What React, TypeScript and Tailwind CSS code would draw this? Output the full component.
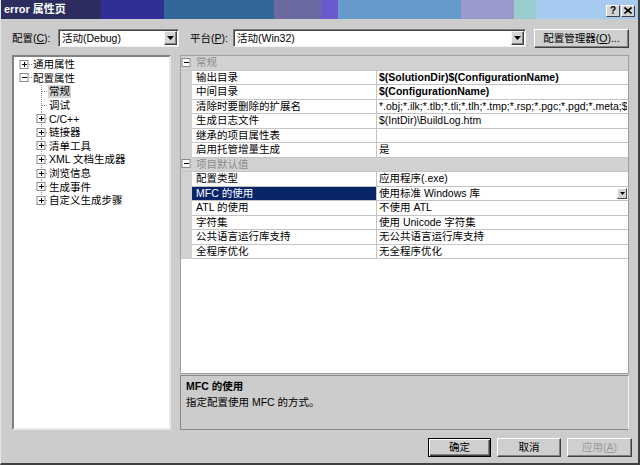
import React from "react";

const TREE: { level: number; kind: "plus" | "minus" | "leaf"; label: string; selected?: boolean; last?: boolean }[] = [
  { level: 0, kind: "plus", label: "通用属性" },
  { level: 0, kind: "minus", label: "配置属性" },
  { level: 1, kind: "leaf", label: "常规", selected: true },
  { level: 1, kind: "leaf", label: "调试" },
  { level: 1, kind: "plus", label: "C/C++" },
  { level: 1, kind: "plus", label: "链接器" },
  { level: 1, kind: "plus", label: "清单工具" },
  { level: 1, kind: "plus", label: "XML 文档生成器" },
  { level: 1, kind: "plus", label: "浏览信息" },
  { level: 1, kind: "plus", label: "生成事件" },
  { level: 1, kind: "plus", label: "自定义生成步骤", last: true },
];

function ExpBox({ cx, kind }: { cx: number; kind: "plus" | "minus" }) {
  return (
    <g>
      <rect x={cx - 4} y={2.5} width={8} height={8} fill="#ffffff" stroke="#8a8a8a" />
      <line x1={cx - 2} y1={6.5} x2={cx + 3} y2={6.5} stroke="#000" />
      {kind === "plus" && <line x1={cx + 0.5} y1={4} x2={cx + 0.5} y2={9} stroke="#000" />}
    </g>
  );
}

function TreeRow({ level, kind, label, selected, last }: (typeof TREE)[number]) {
  const w = level === 0 ? 18 : 34;
  const cx = level === 0 ? 10 : 27;
  return (
    <div className="flex items-center h-[13.6px]">
      <svg width={w} height={14} className="shrink-0">
        {level === 1 && (
          <line x1={cx + 0.5} y1={0} x2={cx + 0.5} y2={last ? 7 : 14} stroke="#909090" strokeDasharray="1 1" />
        )}
        {kind === "leaf" ? (
          <line x1={cx + 1} y1={6.5} x2={w} y2={6.5} stroke="#909090" strokeDasharray="1 1" />
        ) : (
          <>
            <ExpBox cx={cx} kind={kind} />
            <line x1={cx + 5} y1={6.5} x2={w} y2={6.5} stroke="#909090" strokeDasharray="1 1" />
          </>
        )}
      </svg>
      <span className={selected ? "bg-[#d4d4d4] px-[1px] leading-[13px]" : "px-[1px] leading-[13px]"}>{label}</span>
    </div>
  );
}

function Arrow() {
  return (
    <div className="w-[13px] h-[14px] shrink-0 bg-[#d4d4d4] border border-t-[#f4f4f4] border-l-[#f4f4f4] border-r-[#404040] border-b-[#404040] shadow-[inset_-1px_-1px_0_#808080] flex items-center justify-center">
      <svg width={7} height={4}>
        <polygon points="0,0 7,0 3.5,4" fill="#000" />
      </svg>
    </div>
  );
}

function Combo({ w, text }: { w: string; text: string }) {
  return (
    <div className={`${w} h-[18px] bg-white border border-t-[#808080] border-l-[#808080] border-r-[#f0f0f0] border-b-[#f0f0f0] shadow-[inset_1px_1px_0_#404040] flex items-center pl-[3px] pr-[1px]`}>
      <span className="flex-1 leading-[13px] whitespace-nowrap">{text}</span>
      <Arrow />
    </div>
  );
}

type Prop = { name: string; value: string; bold?: boolean; sel?: boolean; dd?: boolean };
const GROUPS: { title: string; rows: Prop[] }[] = [
  {
    title: "常规",
    rows: [
      { name: "输出目录", value: "$(SolutionDir)$(ConfigurationName)", bold: true },
      { name: "中间目录", value: "$(ConfigurationName)", bold: true },
      { name: "清除时要删除的扩展名", value: "*.obj;*.ilk;*.tlb;*.tli;*.tlh;*.tmp;*.rsp;*.pgc;*.pgd;*.meta;$" },
      { name: "生成日志文件", value: "$(IntDir)\\BuildLog.htm" },
      { name: "继承的项目属性表", value: "" },
      { name: "启用托管增量生成", value: "是" },
    ],
  },
  {
    title: "项目默认值",
    rows: [
      { name: "配置类型", value: "应用程序(.exe)" },
      { name: "MFC 的使用", value: "使用标准 Windows 库", sel: true, dd: true },
      { name: "ATL 的使用", value: "不使用 ATL" },
      { name: "字符集", value: "使用 Unicode 字符集" },
      { name: "公共语言运行库支持", value: "无公共语言运行库支持" },
      { name: "全程序优化", value: "无全程序优化" },
    ],
  },
];

function Btn({ children, def, disabled, w }: { children: React.ReactNode; def?: boolean; disabled?: boolean; w: string }) {
  return (
    <div
      className={`${w} h-[19px] flex items-center justify-center bg-[#cfcfcf] ${
        def
          ? "border border-black shadow-[inset_1px_1px_0_#ffffff,inset_-1px_-1px_0_#404040,inset_-2px_-2px_0_#808080]"
          : "border border-t-white border-l-white border-r-[#404040] border-b-[#404040] shadow-[inset_-1px_-1px_0_#808080]"
      } ${disabled ? "text-[#9a9a9a]" : "text-black"}`}
    >
      <span className="leading-[13px]">{children}</span>
    </div>
  );
}

export default function App() {
  return (
    <div className="w-[640px] h-[465px] bg-[#cccccc] flex flex-col border-r-2 border-b-2 border-r-[#404040] border-b-[#404040] border-l border-l-[#e4e4e4] overflow-hidden text-[10.5px] text-black font-[Tahoma,'Liberation_Sans','Noto_Sans_CJK_SC',sans-serif]">
      {/* title bar */}
      <div className="h-[19px] shrink-0 flex items-center justify-between pl-[3px] pr-[3px] bg-[linear-gradient(90deg,#2c2d5e_0px,#2c2d5e_100px,#2f2f96_100px,#2f2f96_163px,#336699_163px,#336699_273px,#6b6aa0_273px,#6b6aa0_320px,#6a5acd_320px,#6a5acd_337px,#6699cc_337px,#6699cc_460px,#9999cc_460px,#9999cc_513px,#99cccc_513px,#99cccc_535px,#a6caf0_535px)]">
        <span className="text-white font-bold text-[11px] leading-[13px]">error 属性页</span>
        <div className="flex gap-[1px] mt-[2px]">
          <div className="w-[14px] h-[12px] bg-[#d4d4d4] border border-t-white border-l-white border-r-[#404040] border-b-[#404040] flex items-center justify-center text-[10px] font-bold leading-[10px]">?</div>
          <div className="w-[14px] h-[12px] bg-[#d4d4d4] border border-t-white border-l-white border-r-[#404040] border-b-[#404040] flex items-center justify-center">
            <svg width={8} height={7}>
              <path d="M0.5 0.5 L7.5 6.5 M7.5 0.5 L0.5 6.5" stroke="#000" strokeWidth={1.6} />
            </svg>
          </div>
        </div>
      </div>

      {/* top row */}
      <div className="mt-[9px] h-[20px] shrink-0 flex items-center pl-[11px]">
        <span className="w-[46px] leading-[13px]">
          配置(<u>C</u>):
        </span>
        <Combo w="w-[121px]" text="活动(Debug)" />
        <span className="ml-[11px] w-[43px] leading-[13px]">
          平台(<u>P</u>):
        </span>
        <Combo w="w-[293px]" text="活动(Win32)" />
        <div className="ml-[8px]">
          <Btn w="w-[95px]">
            配置管理器(<u>O</u>)...
          </Btn>
        </div>
      </div>

      {/* main area */}
      <div className="mt-[7px] h-[375px] shrink-0 flex pl-[11px]">
        <div className="w-[159px] h-full bg-white border-2 border-t-[#808080] border-l-[#808080] border-r-[#e8e8e8] border-b-[#e8e8e8] pt-[1px]">
          {TREE.map((t, i) => (
            <TreeRow key={i} {...t} />
          ))}
        </div>

        <div className="ml-[9px] w-[449px] h-full flex flex-col">
          <div className="flex-1 bg-white border border-[#a0a0a0] flex flex-col">
            {GROUPS.map((g) => (
              <React.Fragment key={g.title}>
                <div className="h-[14.5px] shrink-0 flex items-center bg-[#d2d2d2] border-b border-[#c4c4c4]">
                  <svg width={11} height={14} className="shrink-0">
                    <ExpBox cx={5} kind="minus" />
                  </svg>
                  <span className="pl-[4px] text-[#8c8c8c] leading-[13px]">{g.title}</span>
                </div>
                {g.rows.map((r) => (
                  <div key={r.name} className="h-[14.5px] shrink-0 flex">
                    <div className="w-[11px] shrink-0 bg-[#d2d2d2]" />
                    <div
                      className={`w-[185px] shrink-0 flex items-center pl-[4px] border-r border-b border-[#c4c4c4] whitespace-nowrap overflow-hidden ${
                        r.sel ? "bg-[#0a246a] text-white" : ""
                      }`}
                    >
                      <span className="leading-[13px]">{r.name}</span>
                    </div>
                    <div className="flex-1 min-w-0 flex items-center pl-[2px] pr-[1px] border-b border-[#c4c4c4] whitespace-nowrap overflow-hidden">
                      <span className={`flex-1 overflow-hidden leading-[13px] ${r.bold ? "font-bold" : ""}`}>{r.value}</span>
                      {r.dd && (
                        <div className="w-[10px] h-[11px] shrink-0 bg-[#d4d4d4] border border-t-white border-l-white border-r-[#404040] border-b-[#404040] flex items-center justify-center">
                          <svg width={5} height={3}>
                            <polygon points="0,0 5,0 2.5,3" fill="#000" />
                          </svg>
                        </div>
                      )}
                    </div>
                  </div>
                ))}
              </React.Fragment>
            ))}
          </div>
          <div className="h-[55px] shrink-0 mt-[1px] border border-t-[#8a8a8a] border-l-[#8a8a8a] border-r-[#f0f0f0] border-b-[#8a8a8a] pl-[5px] pt-[2px] flex flex-col">
            <span className="font-bold leading-[16px]">MFC 的使用</span>
            <span className="leading-[16px]">指定配置使用 MFC 的方式。</span>
          </div>
        </div>
      </div>

      {/* buttons */}
      <div className="mt-[8px] h-[19px] shrink-0 flex justify-end pr-[6px] gap-[6px]">
        <Btn w="w-[63px]" def>
          确定
        </Btn>
        <Btn w="w-[64px]">取消</Btn>
        <Btn w="w-[65px]" disabled>
          应用(<u>A</u>)
        </Btn>
      </div>
    </div>
  );
}
